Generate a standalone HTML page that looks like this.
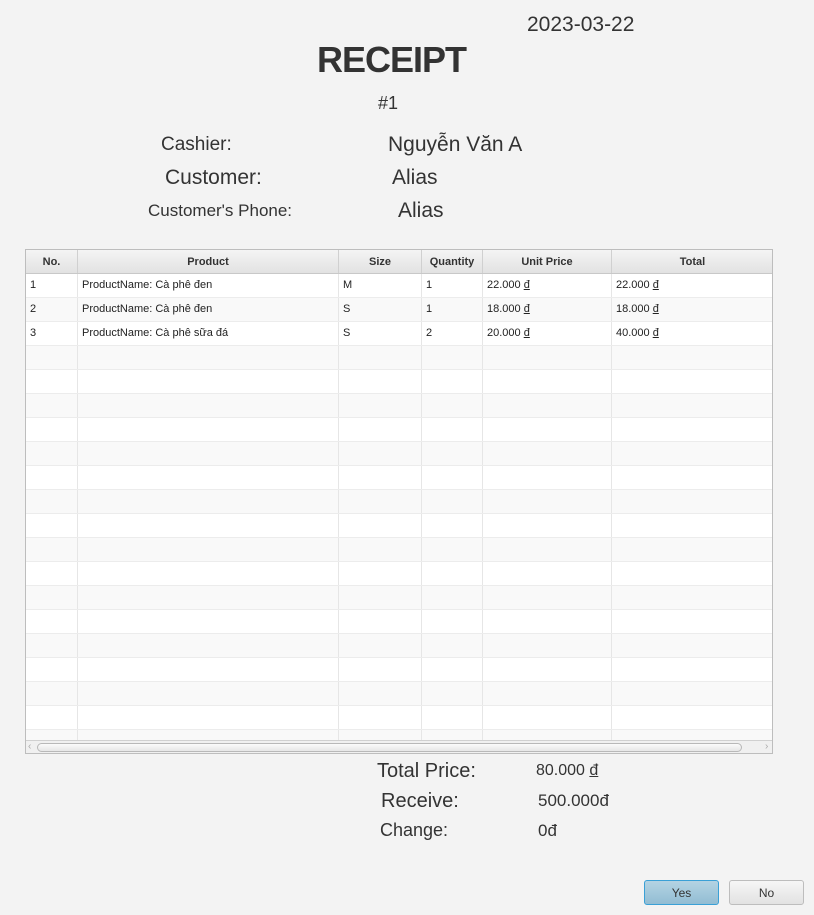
<!DOCTYPE html>
<html><head><meta charset="utf-8"><style>
body{margin:0;width:814px;height:915px;background:#f3f3f3;font-family:"Liberation Sans","DejaVu Sans",sans-serif;color:#333;position:relative;overflow:hidden}
.t{position:absolute;white-space:nowrap;line-height:1}
#tbl{position:absolute;left:25px;top:249px;width:746px;height:503px;border:1px solid #bdbdbd;background:#fff;overflow:hidden}
.row{position:absolute;left:0;width:747px;height:24px;border-bottom:1px solid #ececec;box-sizing:border-box}
.c{position:absolute;top:0;height:100%;border-right:1px solid #e6e6e6;box-sizing:border-box;font-size:11px;line-height:23px;padding-left:4px;color:#222}
.hd{background:linear-gradient(#f4f4f4,#e2e2e2);border-bottom:1px solid #c8c8c8}
.hd .c{text-align:center;font-weight:bold;padding:0;border-right:1px solid #d0d0d0;color:#333;line-height:25px}
.btn{position:absolute;top:880px;width:75px;height:25px;border-radius:3px;font-size:12px;text-align:center;line-height:24px;box-sizing:border-box}
</style></head><body>
<div class="t" style="left:527px;top:14px;font-size:21px">2023-03-22</div>
<div class="t" style="left:317px;top:42px;font-size:36px;font-weight:bold;letter-spacing:-1px">RECEIPT</div>
<div class="t" style="left:378px;top:94px;font-size:18px">#1</div>
<div class="t" style="left:161px;top:135px;font-size:19px">Cashier:</div>
<div class="t" style="left:388px;top:134px;font-size:21px">Nguyễn Văn A</div>
<div class="t" style="left:165px;top:167px;font-size:21px">Customer:</div>
<div class="t" style="left:392px;top:167px;font-size:21px">Alias</div>
<div class="t" style="left:148px;top:202px;font-size:17px">Customer's Phone:</div>
<div class="t" style="left:398px;top:200px;font-size:21px">Alias</div>

<div id="tbl">
<div class="row hd" style="top:0;height:24px">
<div class="c" style="left:0;width:52px">No.</div><div class="c" style="left:52px;width:261px">Product</div><div class="c" style="left:313px;width:83px">Size</div><div class="c" style="left:396px;width:61px">Quantity</div><div class="c" style="left:457px;width:129px">Unit Price</div><div class="c" style="left:586px;width:161px;border-right:0">Total</div>
</div>
<div id="rows"></div>
<div style="position:absolute;left:0;top:490px;width:747px;height:13px;background:#f0f0f0;border-top:1px solid #d0d0d0">
<div style="position:absolute;left:11px;top:2px;width:703px;height:7px;border:1px solid #b8b8b8;border-radius:5px;background:linear-gradient(#fafafa,#e6e6e6)"></div>
<div class="t" style="left:2px;top:1px;font-size:10px;color:#aaa">‹</div><div class="t" style="left:739px;top:1px;font-size:10px;color:#aaa">›</div>
</div>
</div>
<script>
var D=" <u>đ</u>";
var d=[["1","ProductName: Cà phê đen","M","1","22.000"+D,"22.000"+D],["2","ProductName: Cà phê đen","S","1","18.000"+D,"18.000"+D],["3","ProductName: Cà phê sữa đá","S","2","20.000"+D,"40.000"+D]];
var L=[0,52,313,396,457,586],W=[52,261,83,61,129,161],h="";
for(var i=0;i<20;i++){var r=d[i]||["","","","","",""];h+='<div class="row" style="top:'+(24+i*24)+'px;background:'+(i%2?'#f9f9f9':'#fff')+'">';for(var j=0;j<6;j++)h+='<div class="c" style="left:'+L[j]+'px;width:'+W[j]+'px'+(j==5?';border-right:0':'')+'">'+r[j]+'</div>';h+='</div>';}
document.getElementById("rows").innerHTML=h;
</script>
<div class="t" style="left:377px;top:761px;font-size:20px">Total Price:</div>
<div class="t" style="left:536px;top:763px;font-size:16px">80.000 <u>đ</u></div>
<div class="t" style="left:381px;top:791px;font-size:20px">Receive:</div>
<div class="t" style="left:538px;top:792px;font-size:17px">500.000đ</div>
<div class="t" style="left:380px;top:821px;font-size:18px">Change:</div>
<div class="t" style="left:538px;top:822px;font-size:17px">0đ</div>
<div class="btn" style="left:644px;background:linear-gradient(#b4d3e3,#92bdd3);border:1px solid #3aa0d6">Yes</div>
<div class="btn" style="left:729px;background:linear-gradient(#f6f6f6,#e2e2e2);border:1px solid #bdbdbd">No</div>
</body></html>
